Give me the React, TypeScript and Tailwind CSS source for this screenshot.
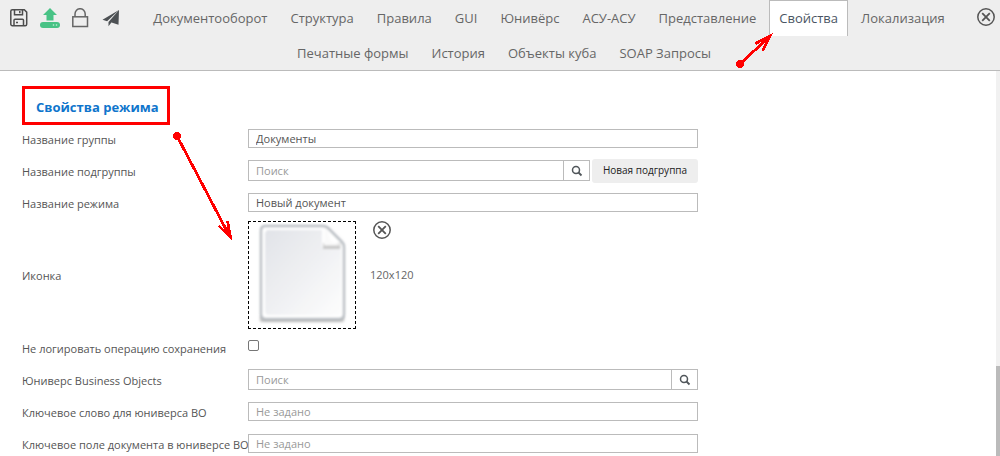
import { useId, useState } from "react";
import type { ReactNode } from "react";

const primaryTabs = [
  "Документооборот",
  "Структура",
  "Правила",
  "GUI",
  "Юнивёрс",
  "АСУ-АСУ",
  "Представление",
  "Свойства",
  "Локализация",
];
const secondaryTabs = ["Печатные формы", "История", "Объекты куба", "SOAP Запросы"];

function SaveIcon() {
  return (
    <svg className="h-5 w-5" viewBox="0 0 20 20" fill="none" stroke="#4d4d4d" strokeWidth="1.5">
      <path d="M1.800 3.200a1.500 1.500 0 0 1 1.500-1.500h12l2.400 2.400v12.100a1.500 1.500 0 0 1-1.500 1.500H3.300a1.500 1.500 0 0 1-1.500-1.500z" />
      <path d="M5.500 1.700v5h8v-5M10.800 3v2.300M5 17.700v-5.500a1 1 0 0 1 1-1h7.500a1 1 0 0 1 1 1v5.500M7 14.500h2" />
    </svg>
  );
}

function UploadIcon() {
  return (
    <svg className="h-5 w-5" viewBox="0 0 20 20" fill="#48c285">
      <path d="M10 0l7 7h-3.500v5.500h-7V7H3z" />
      <rect x="0" y="14" width="20" height="6" rx="3" />
      <circle cx="13.500" cy="17" r="0.800" fill="#c9f0db" />
      <circle cx="16.500" cy="17" r="0.800" fill="#c9f0db" />
    </svg>
  );
}

function LockIcon() {
  return (
    <svg className="h-5 w-5" viewBox="0 0 20 20" fill="none" stroke="#666" strokeWidth="1.5">
      <rect x="1.800" y="8.800" width="14.700" height="9.700" />
      <path d="M4 8.800V6a5 5.200 0 0 1 10.200 0v2.800" />
    </svg>
  );
}

function SendIcon() {
  return (
    <svg className="h-5 w-5" viewBox="0 0 20 20" fill="#4d5154">
      <path d="M17 2L.5 11.800l4.600 1.400zM17 2L6.500 14v4.200l2.500-3.100zM17 2L8 14l8.500 2.800z" />
    </svg>
  );
}

function CloseIcon() {
  return (
    <svg className="h-[18px] w-[18px]" viewBox="0 0 18 18" fill="none" stroke="#555" strokeWidth="1.5">
      <circle cx="9" cy="9" r="8.200" />
      <path d="M5.200 5.200l7.600 7.600M12.800 5.200l-7.600 7.600" strokeWidth="1.800" />
    </svg>
  );
}

function SearchIcon() {
  return (
    <svg className="h-3 w-3" viewBox="0 0 12 12" fill="none" stroke="#50565a">
      <circle cx="5" cy="5" r="3.500" strokeWidth="1.500" />
      <path d="M7.500 7.500l3 3" strokeWidth="1.800" />
    </svg>
  );
}

function DocumentPicture() {
  return (
    <svg className="h-full w-full" viewBox="0 0 106 106">
      <defs>
        <linearGradient id="paper" x1="0" y1="0" x2="1" y2="1">
          <stop offset="0" stopColor="#e1e3e8" />
          <stop offset="1" stopColor="#fdfdfd" />
        </linearGradient>
        <filter id="soft" x="-10%" y="-10%" width="120%" height="120%">
          <feGaussianBlur stdDeviation="0.8" />
        </filter>
        <filter id="shadow" x="-20%" y="-300%" width="140%" height="700%">
          <feGaussianBlur stdDeviation="1.8" />
        </filter>
      </defs>
      <rect x="11" y="94" width="84" height="6" rx="2" fill="#bbb" filter="url(#shadow)" />
      <g filter="url(#soft)">
        <path
          d="M16 4h58q3 0 5 2l14 14q2 2 2 5v67q0 5-5 5H17q-5 0-5-5V9q0-5 4-5z"
          fill="#fff"
          stroke="#b9bec3"
          strokeWidth="2.5"
        />
        <path d="M18 8h55v17h19v64q0 4-4 4H20q-4 0-4-4V11z" fill="url(#paper)" />
        <path d="M74 21h18l-1 6H74z" fill="#c9c9c9" />
        <path d="M75 6.500q3 0 4 3l2 8q1 3 4 3l8 2q-2 1-6 1H75z" fill="#fafafa" />
      </g>
    </svg>
  );
}

function ToolButton({ label, children }: { label: string; children: ReactNode }) {
  return (
    <button type="button" aria-label={label} className="flex size-5 items-center justify-center">
      {children}
    </button>
  );
}

function Tab({ name, active, onSelect }: { name: string; active: boolean; onSelect: (n: string) => void }) {
  return (
    <button
      type="button"
      aria-current={active ? "page" : undefined}
      onClick={() => onSelect(name)}
      className={
        "h-9 whitespace-nowrap border border-b-0 px-[9px] text-[13px] " +
        (active ? "border-[#bbb] bg-white text-[#4a5563]" : "border-transparent text-[#666]")
      }
    >
      {name}
    </button>
  );
}

function Row({ label, id, tall, children }: { label: string; id?: string; tall?: boolean; children: ReactNode }) {
  return (
    <div className={"flex items-center " + (tall ? "h-[113px]" : "h-8")}>
      <label htmlFor={id} className="w-[226px] shrink-0 pt-[2px] text-[11px] whitespace-nowrap text-[#555]">
        {label}
      </label>
      <div className="flex w-[450px] items-center pb-px">{children}</div>
    </div>
  );
}

const inputClass =
  "w-full min-w-0 border border-[#bbb] bg-white px-[7px] text-[11px] text-[#555] placeholder:text-[#999] outline-none";

function TextRow({ label, value, placeholder }: { label: string; value?: string; placeholder?: string }) {
  const id = useId();
  return (
    <Row label={label} id={id}>
      <input id={id} type="text" defaultValue={value} placeholder={placeholder} className={"h-[19px] " + inputClass} />
    </Row>
  );
}

function SearchRow({ label, action }: { label: string; action?: string }) {
  const id = useId();
  return (
    <Row label={label} id={id}>
      <div className="flex flex-1">
        <input id={id} type="text" placeholder="Поиск" className={"h-[21px] " + inputClass} />
        <button
          type="button"
          aria-label="Найти"
          className="flex h-[21px] w-[26px] shrink-0 items-center justify-center border border-l-0 border-[#bbb] bg-white"
        >
          <SearchIcon />
        </button>
      </div>
      {action && (
        <button
          type="button"
          className="ml-[2px] h-6 w-[106px] rounded-[3px] bg-[#eee] text-[10px] whitespace-nowrap text-[#222]"
        >
          {action}
        </button>
      )}
    </Row>
  );
}

export default function App() {
  const [tab, setTab] = useState("Свойства");
  const checkboxId = useId();

  return (
    <div className="relative flex h-screen flex-col overflow-hidden bg-white font-['Open_Sans','Noto_Sans',sans-serif]">
      <header className="h-[71px] shrink-0 border-b border-[#bbb] bg-[#eee]">
        <div className="flex h-[35px] items-start">
          <div className="flex h-9 shrink-0 items-center gap-[11px] pl-[9px]">
            <ToolButton label="Сохранить"><SaveIcon /></ToolButton>
            <ToolButton label="Загрузить"><UploadIcon /></ToolButton>
            <ToolButton label="Заблокировать"><LockIcon /></ToolButton>
            <ToolButton label="Отправить"><SendIcon /></ToolButton>
          </div>
          <nav className="flex flex-1 justify-center gap-[3px]">
            {primaryTabs.map((name) => (
              <Tab key={name} name={name} active={tab === name} onSelect={setTab} />
            ))}
          </nav>
          <div className="flex h-[34px] items-center pr-1">
            <ToolButton label="Закрыть"><CloseIcon /></ToolButton>
          </div>
        </div>
        <nav className="flex justify-center gap-[3px] pl-2">
          {secondaryTabs.map((name) => (
            <Tab key={name} name={name} active={tab === name} onSelect={setTab} />
          ))}
        </nav>
      </header>

      <div className="flex min-h-0 flex-1">
        <main className="min-w-0 flex-1 overflow-hidden pl-[22px]">
          <div className="flex h-[52px] pt-[15px]">
            <h1 className="h-[39px] shrink-0 border-3 border-[#f00] pt-[8px] pr-[8px] pl-[11px] text-[13px] leading-[20px] font-bold text-[#0f75cc]">
              Свойства режима
            </h1>
          </div>
          <form onSubmit={(e) => e.preventDefault()}>
            <TextRow label="Название группы" value="Документы" />
            <SearchRow label="Название подгруппы" action="Новая подгруппа" />
            <TextRow label="Название режима" value="Новый документ" />
            <Row label="Иконка" tall>
              <div className="size-[108px] border border-dashed border-black">
                <DocumentPicture />
              </div>
              <div className="flex h-[108px] flex-col items-start gap-[26px] pl-[14px]">
                <button type="button" aria-label="Удалить иконку" className="flex h-[18px] w-6 justify-center">
                  <CloseIcon />
                </button>
                <span className="text-[11px] leading-5 text-[#666]">120x120</span>
              </div>
            </Row>
            <Row label="Не логировать операцию сохранения" id={checkboxId}>
              <input
                id={checkboxId}
                type="checkbox"
                className="mb-1 size-[11px] appearance-none rounded-[2px] border border-[#767676] bg-white checked:bg-[#0f75cc]"
              />
            </Row>
            <SearchRow label="Юниверс Business Objects" />
            <TextRow label="Ключевое слово для юниверса BO" placeholder="Не задано" />
            <TextRow label="Ключевое поле документа в юниверсе BO" placeholder="Не задано" />
          </form>
        </main>
        <div aria-hidden="true" className="flex w-1 shrink-0 flex-col justify-end bg-[#f1f1f1]">
          <div className="h-[23.4%] bg-[#bbb]" />
        </div>
      </div>

      <svg
        aria-hidden="true"
        className="pointer-events-none absolute top-0 left-0 h-[456px] w-[1000px]"
        viewBox="0 0 1000 456"
        fill="none"
        stroke="#f00"
        strokeWidth="2.8"
        shapeRendering="crispEdges"
      >
        <circle cx="740" cy="64" r="4" fill="#f00" stroke="none" />
        <path d="M740 64L769 37M755.500 43.500L770 36L762.500 51" />
        <circle cx="177" cy="136" r="4" fill="#f00" stroke="none" />
        <path d="M177 136L230 237M219 226L230.500 237.500L227.500 221" />
      </svg>
    </div>
  );
}
